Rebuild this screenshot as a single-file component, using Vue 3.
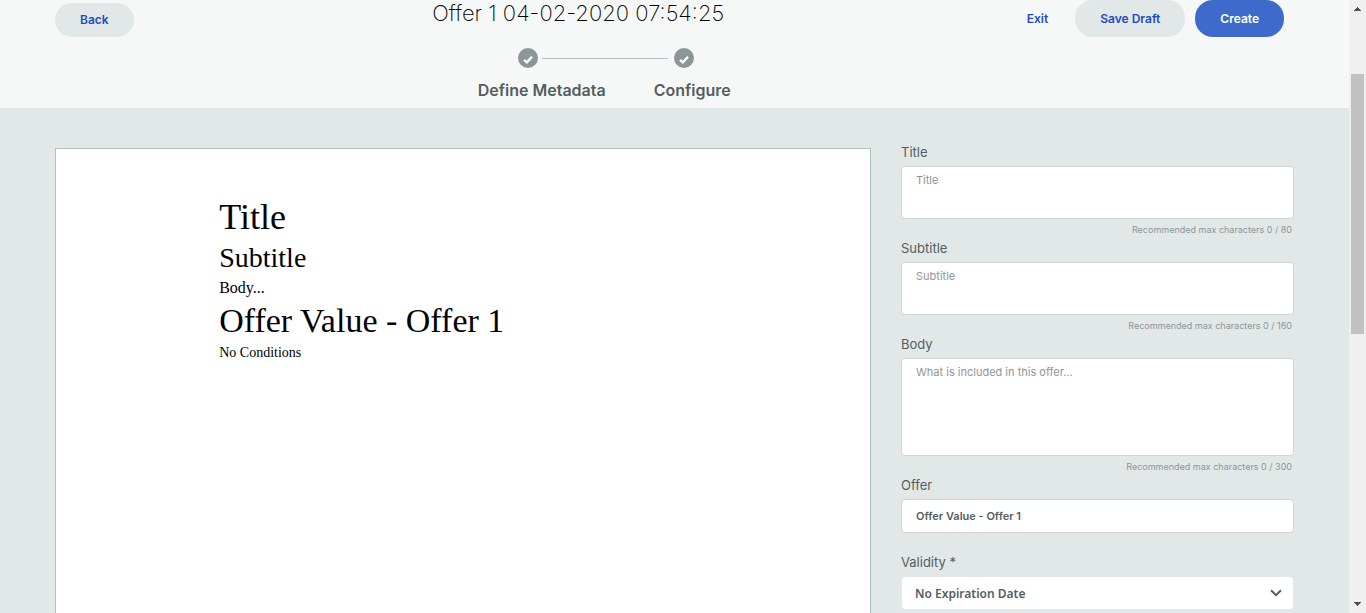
<script setup>
import { ref } from 'vue'

const steps = ['Define Metadata', 'Configure']
const fields = ref([
  { id: 'title', label: 'Title', placeholder: 'Title', max: 80, value: '', size: 'short' },
  { id: 'subtitle', label: 'Subtitle', placeholder: 'Subtitle', max: 160, value: '', size: 'short' },
  { id: 'body', label: 'Body', placeholder: 'What is included in this offer...', max: 300, value: '', size: 'tall' }
])
const offer = ref('Offer Value - Offer 1')
const validity = ref('No Expiration Date')
</script>

<template>
  <div class="window">
    <div class="page">
      <header class="header">
        <button type="button" class="btn btn-back">Back</button>
        <div class="center">
          <h1>Offer 1 04-02-2020 07:54:25</h1>
          <div class="stepper">
            <div class="marks">
              <svg class="mark" viewBox="0 0 20 20" aria-hidden="true">
                <circle cx="10" cy="10" r="10" />
                <path d="M6 11.8L8.8 14.4L14 8.8" />
              </svg>
              <span class="line"></span>
              <svg class="mark" viewBox="0 0 20 20" aria-hidden="true">
                <circle cx="10" cy="10" r="10" />
                <path d="M6 11.8L8.8 14.4L14 8.8" />
              </svg>
            </div>
            <div class="steps">
              <span v-for="s in steps" :key="s">{{ s }}</span>
            </div>
          </div>
        </div>
        <div class="actions">
          <a href="#" class="exit">Exit</a>
          <button type="button" class="btn">Save Draft</button>
          <button type="button" class="btn btn-primary">Create</button>
        </div>
      </header>

      <main class="content">
        <section class="preview">
          <div class="p-title">Title</div>
          <div class="p-subtitle">Subtitle</div>
          <div class="p-body">Body...</div>
          <div class="p-offer">{{ offer }}</div>
          <div class="p-cond">No Conditions</div>
        </section>

        <form class="form" @submit.prevent>
          <div v-for="f in fields" :key="f.id" class="field">
            <label :for="f.id">{{ f.label }}</label>
            <textarea :id="f.id" v-model="f.value" :class="f.size" :placeholder="f.placeholder"></textarea>
            <p class="hint">Recommended max characters {{ f.value.length }} / {{ f.max }}</p>
          </div>
          <div class="field field-offer">
            <label for="offer">Offer</label>
            <input id="offer" v-model="offer" type="text">
          </div>
          <div class="field">
            <label for="validity">Validity *</label>
            <div class="select">
              <select id="validity" v-model="validity">
                <option>No Expiration Date</option>
              </select>
              <svg viewBox="0 0 12 8" aria-hidden="true"><path d="M1 1.2L6 6.2L11 1.2" /></svg>
            </div>
          </div>
        </form>
      </main>
    </div>

    <div class="scrollbar" aria-hidden="true">
      <svg viewBox="0 0 17 17" shape-rendering="crispEdges"><path d="M5 11h7v-1h-1v-1h-1v-1h-1v-1h-1v1h-1v1h-1v1h-1z" /></svg>
      <div class="track"><div class="thumb"></div></div>
      <svg viewBox="0 0 17 17" shape-rendering="crispEdges"><path d="M5 6h7v1h-1v1h-1v1h-1v1h-1v-1h-1v-1h-1v-1h-1z" /></svg>
    </div>
  </div>
</template>

<style>
body {
  margin: 0;
  overflow: hidden;
}
</style>

<style scoped>
* {
  box-sizing: border-box;
}
.window {
  display: flex;
  height: 100vh;
  overflow: hidden;
  background: #e2e8e7;
  font-family: Inter, "Open Sans", sans-serif;
  color: #535e62;
}
.page {
  flex: 1;
  min-width: 0;
  display: flex;
  flex-direction: column;
}
.header {
  display: flex;
  align-items: flex-start;
  flex-shrink: 0;
  padding: 0 65px 8px 55px;
  background: #f6f8f7;
}
.btn {
  height: 37px;
  padding: 0 25px;
  border: 0;
  border-radius: 18px;
  background: #e2e8e7;
  color: #1c4cc0;
  font: 600 12px/20px Inter, sans-serif;
  cursor: pointer;
}
.btn-back {
  height: 34px;
  margin-top: 3px;
}
.btn-primary {
  background: #3e6bcb;
  color: #fff;
}
.center {
  flex: 1;
  display: flex;
  flex-direction: column;
  align-items: center;
}
h1 {
  margin: 0;
  font-size: 22px;
  line-height: 26px;
  font-weight: 200;
  color: #000;
}
.stepper {
  display: flex;
  flex-direction: column;
  align-items: center;
  padding-left: 52px;
  margin-top: 22px;
}
.marks {
  display: flex;
  align-items: center;
  padding-left: 4px;
}
.mark {
  width: 20px;
  height: 20px;
}
.mark circle {
  fill: #8c9697;
}
.mark path {
  fill: none;
  stroke: #fff;
  stroke-width: 2.4;
}
.line {
  width: 126px;
  height: 1px;
  margin: 0 6px 0 4px;
  background: #b3c0c2;
}
.steps {
  display: flex;
  gap: 48px;
  margin-top: 12px;
  font-size: 16px;
  line-height: 20px;
  font-weight: 600;
}
.actions {
  display: flex;
  align-items: center;
  gap: 10px;
}
.exit {
  padding: 0 17px 0 4px;
  color: #1c4cc0;
  font: 600 12px/20px Inter, sans-serif;
  text-decoration: none;
}
.content {
  flex: 1;
  min-height: 0;
  display: grid;
  grid-template-columns: repeat(12, minmax(0, 1fr));
  gap: 30px;
  padding: 40px 55px 0;
}
.preview {
  grid-column: span 8;
  padding: 46px 20% 0;
  border: 1px solid #b3c0c2;
  border-bottom: 0;
  background: #fff;
  color: #000;
  font-family: "Liberation Serif", serif;
}
.p-title {
  font-size: 36px;
  line-height: 44px;
}
.p-subtitle {
  font-size: 28px;
  line-height: 38px;
}
.p-body {
  font-size: 16px;
  line-height: 22px;
}
.p-offer {
  font-size: 34px;
  line-height: 44px;
}
.p-cond {
  font-size: 14px;
  line-height: 20px;
}
.form {
  grid-column: span 4;
}
.field {
  display: flex;
  flex-direction: column;
}
.field-offer {
  margin-bottom: 25px;
}
label {
  margin: -4px 0 6px;
  font-size: 13px;
  line-height: 16px;
}
textarea,
input,
select {
  width: 100%;
  margin: 0;
  border: 1px solid #d0d5d8;
  border-radius: 4px;
  background: #fff;
  color: #535e62;
  font-family: inherit;
  outline: none;
}
textarea {
  display: block;
  padding: 5px 14px;
  resize: none;
  font-size: 11px;
  line-height: 16px;
}
textarea::placeholder {
  color: #8c9697;
  opacity: 1;
}
.short {
  height: 53px;
}
.tall {
  height: 98px;
}
.hint {
  margin: 4px 2px 7px;
  text-align: right;
  color: #8c9697;
  font-size: 9px;
  line-height: 14px;
}
input {
  height: 34px;
  padding: 0 14px;
  font-size: 11px;
  font-weight: 600;
}
.select {
  position: relative;
}
select {
  height: 34px;
  padding: 0 40px 0 13px;
  appearance: none;
  border-color: #e2e8e7;
  font-family: "Noto Sans", sans-serif;
  font-size: 12px;
  font-weight: 600;
}
.select svg {
  position: absolute;
  right: 12px;
  top: 13px;
  width: 12px;
  height: 8px;
  pointer-events: none;
}
.select path {
  fill: none;
  stroke: #535e62;
  stroke-width: 2;
}
.scrollbar {
  display: flex;
  flex-direction: column;
  flex-shrink: 0;
  width: 17px;
  background: #f0f0f0;
}
.scrollbar svg {
  width: 17px;
  height: 17px;
  fill: #505050;
}
.track {
  flex: 1;
  padding: 57px 2px 0;
}
.thumb {
  height: 260px;
  background: #c1c1c1;
}
</style>
